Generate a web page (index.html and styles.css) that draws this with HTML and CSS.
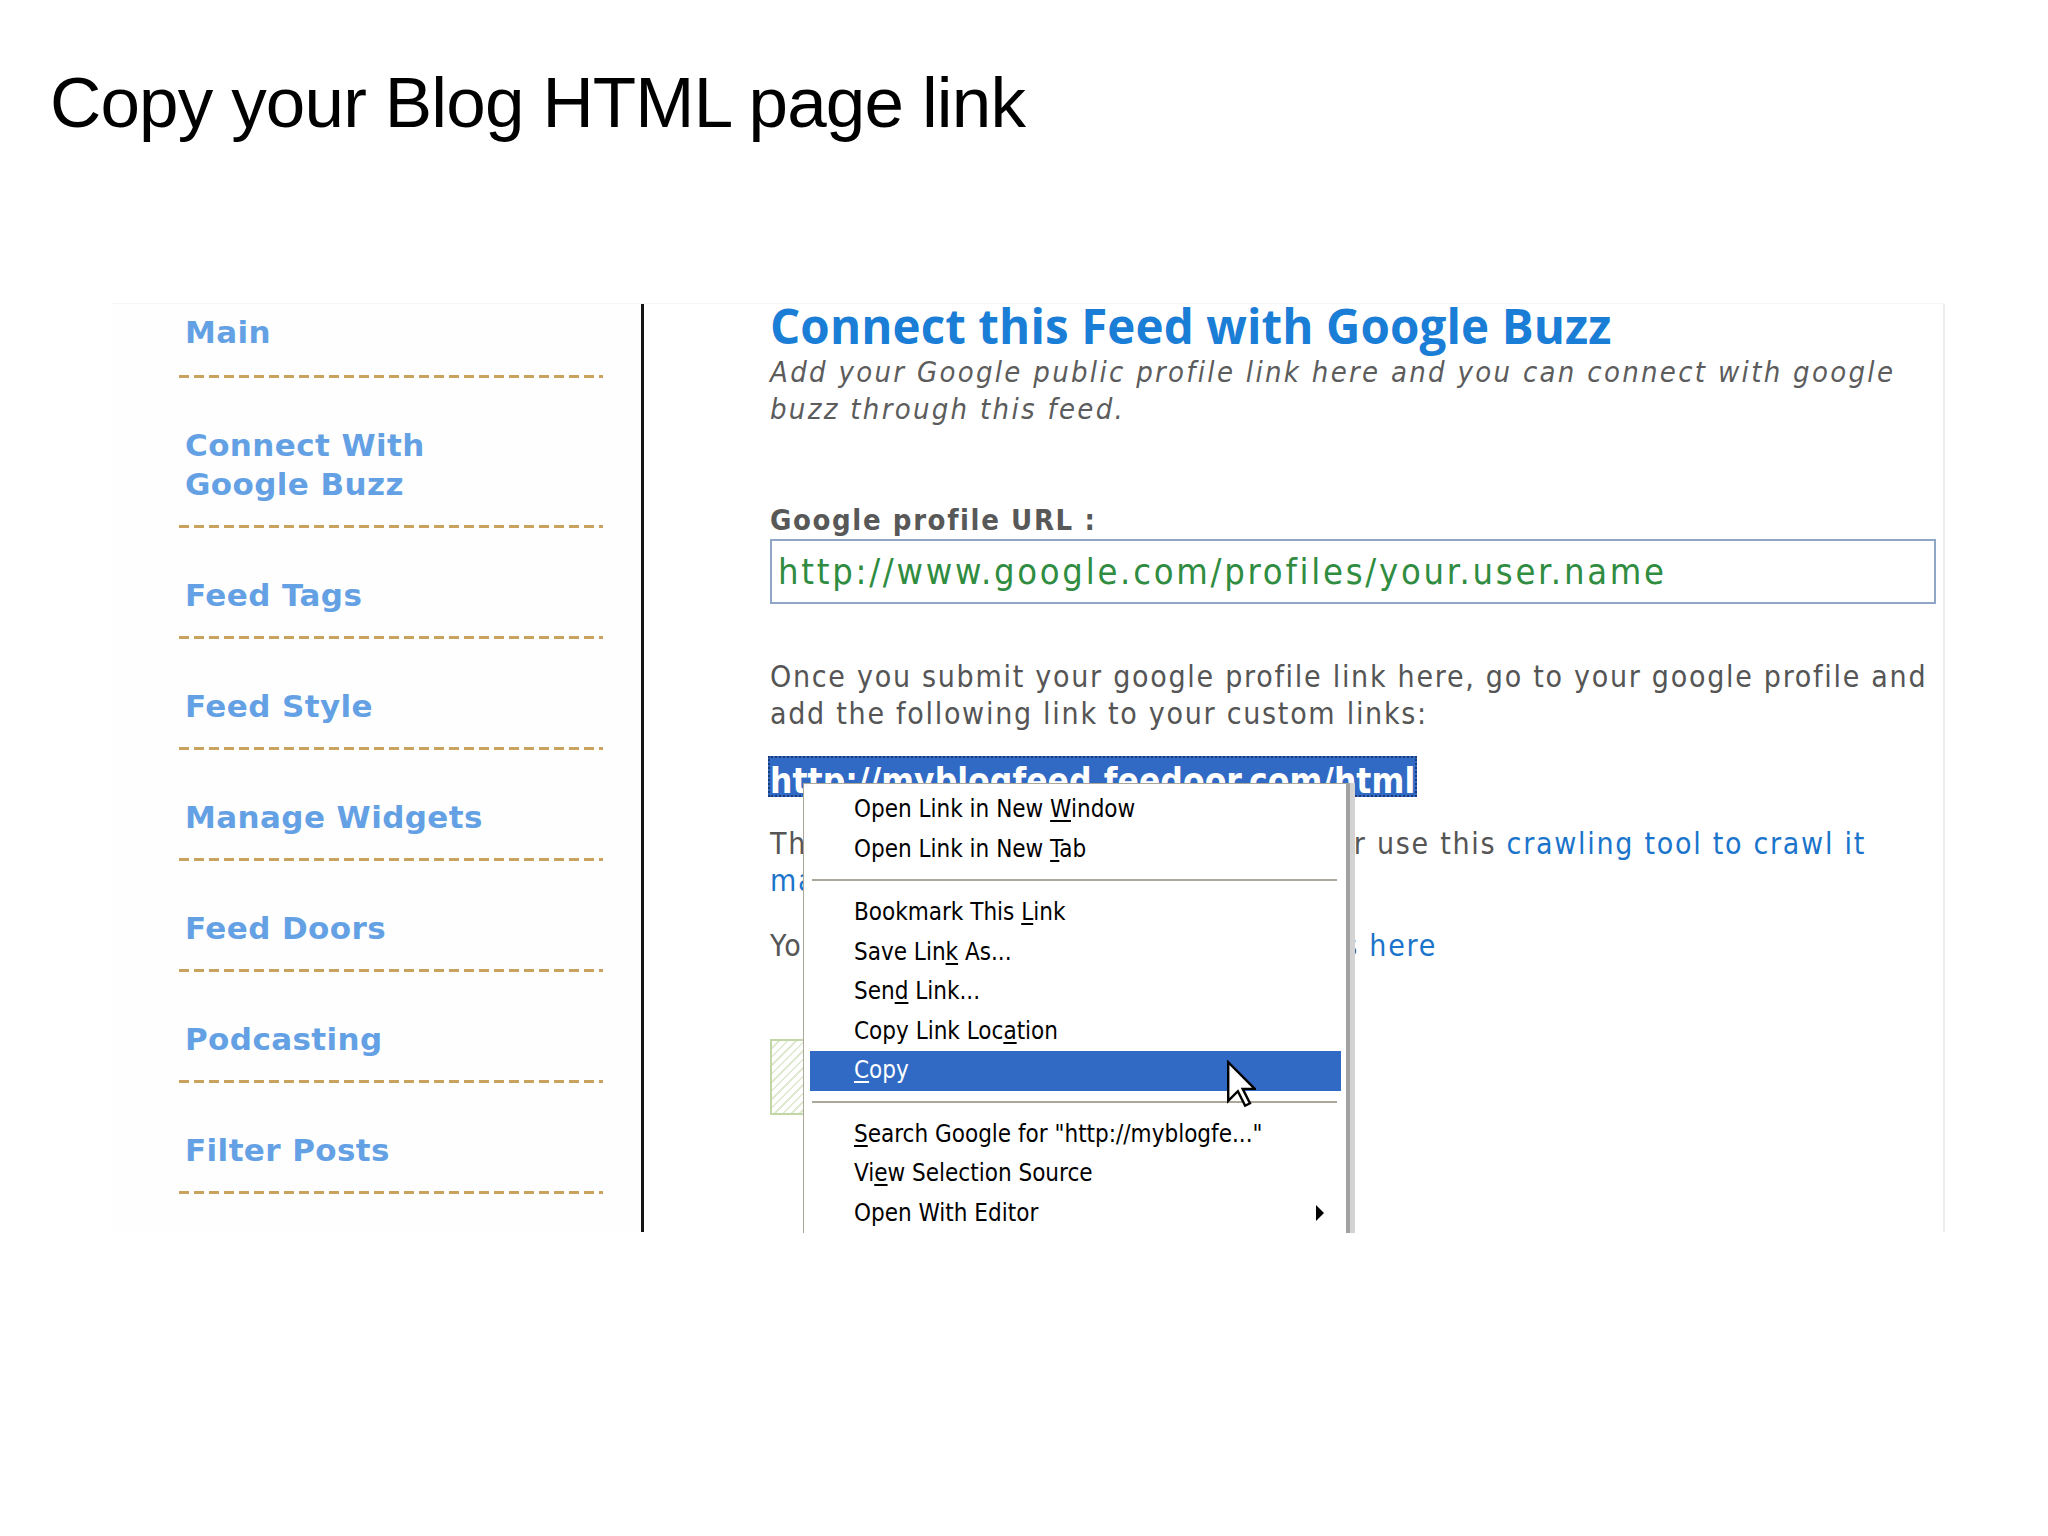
FILE: index.html
```html
<!DOCTYPE html>
<html>
<head>
<meta charset="utf-8">
<title>Copy your Blog HTML page link</title>
<link rel="stylesheet" href="styles.css">
</head>
<body>
<h1 class="title">Copy your Blog HTML page link</h1>
<div class="shot">
  <nav class="sidebar">
    <div class="nav-item first"><span class="nav-text">Main</span></div>
    <div class="nav-item"><span class="nav-text">Connect With<br>Google Buzz</span></div>
    <div class="nav-item"><span class="nav-text">Feed Tags</span></div>
    <div class="nav-item"><span class="nav-text">Feed Style</span></div>
    <div class="nav-item"><span class="nav-text">Manage Widgets</span></div>
    <div class="nav-item"><span class="nav-text">Feed Doors</span></div>
    <div class="nav-item"><span class="nav-text">Podcasting</span></div>
    <div class="nav-item"><span class="nav-text">Filter Posts</span></div>
  </nav>
  <section class="main">
    <h2 class="heading">Connect this Feed with Google Buzz</h2>
    <p class="subtitle">Add your Google public profile link here and you can connect with google buzz through this feed.</p>
    <div class="label">Google profile URL :</div>
    <div class="url-box">http://www.google.com/profiles/your.user.name</div>
    <p class="para p1">Once you submit your google profile link here, go to your google profile and add the following link to your custom links:</p>
    <div class="sel-wrap"><span class="sel">http://myblogfeed.feedoor.com/html</span></div>
    <p class="para p2">This is the HTML page, add to a blog or use this <a class="link">crawling tool to crawl it manually</a>.</p>
    <p class="para p3">You can view all your feed HTML pages <a class="link">here</a></p>
    <div class="btn"></div>

    <div class="ctx-menu">
      <div class="mi">Open Link in New <u>W</u>indow</div>
      <div class="mi">Open Link in New <u>T</u>ab</div>
      <div class="sep"></div>
      <div class="mi">Bookmark This <u>L</u>ink</div>
      <div class="mi">Save Lin<u>k</u> As...</div>
      <div class="mi">Sen<u>d</u> Link...</div>
      <div class="mi">Copy Link Loc<u>a</u>tion</div>
      <div class="mi active"><u>C</u>opy</div>
      <div class="sep"></div>
      <div class="mi"><u>S</u>earch Google for "http://myblogfe..."</div>
      <div class="mi">Vi<u>e</u>w Selection Source</div>
      <div class="mi has-sub"><span>Open With Editor</span><span class="sub-arrow"></span></div>
    </div>

    <svg class="cursor" viewBox="0 0 12 19" width="29" height="48">
      <path d="M0.5,0.5 L0.5,16.5 L4.5,12.5 L7.5,18.5 L9.5,17.5 L6.5,11.5 L11.5,11.5 Z" fill="#fff" stroke="#000" stroke-width="1" stroke-linejoin="miter"/>
    </svg>
  </section>
</div>
</body>
</html>
```

FILE: styles.css
```css
html, body {
  margin: 0;
  padding: 0;
  background: #ffffff;
}

body {
  width: 2048px;
  height: 1536px;
  overflow: hidden;
}

.title {
  margin: 63px 0 0 50px;
  font-family: "Liberation Sans", Arial, sans-serif;
  font-weight: 400;
  font-size: 71px;
  line-height: 80px;
  letter-spacing: -0.85px;
  color: #000;
}

.shot {
  display: flex;
  margin: 160px 0 0 111px;
  width: 1834px;
  height: 929px;
  border-top: 1px solid #f5f5f7;
  box-sizing: border-box;
}

/* ---------- sidebar ---------- */
.sidebar {
  width: 533px;
  flex: none;
  box-sizing: border-box;
  padding: 0 38px 0 68px;
  border-right: 3px solid #141414;
  background: #fefefe;
}

.nav-item {
  padding: 48px 0 21px 6px;
  position: relative;
}

.nav-item.first {
  padding-top: 9px;
  padding-bottom: 23px;
}

.nav-item::after {
  content: "";
  position: absolute;
  left: 0;
  right: 0;
  bottom: -3px;
  height: 3px;
  background: repeating-linear-gradient(to right, #c9a25d 0 10px, transparent 10px 15px);
}

.nav-item + .nav-item {
  margin-top: 3px;
}

.nav-text {
  display: block;
  font-family: "DejaVu Sans", Verdana, sans-serif;
  font-weight: 700;
  font-size: 31px;
  line-height: 39px;
  color: #64a1e4;
  letter-spacing: 0.4px;
}

/* ---------- main ---------- */
.main {
  flex: 1;
  position: relative;
  box-sizing: border-box;
  padding: 0 7px 0 126px;
  border-right: 2px solid #ededed;
}

.heading {
  margin: -4px 0 0;
  font-family: "Open Sans", "DejaVu Sans", sans-serif;
  font-weight: 700;
  font-size: 47.5px;
  line-height: 52px;
  letter-spacing: 0.1px;
  color: #1a7dd6;
  white-space: nowrap;
}

.subtitle {
  margin: 2px 0 0;
  font-family: "DejaVu Sans Condensed", "Liberation Sans", sans-serif;
  font-style: italic;
  font-size: 29px;
  line-height: 37px;
  letter-spacing: 2.3px;
  color: #5c5c5c;
}

.label {
  margin-top: 74px;
  font-family: "DejaVu Sans Condensed", "Liberation Sans", sans-serif;
  font-weight: 700;
  font-size: 29px;
  line-height: 37px;
  letter-spacing: 1.6px;
  color: #585858;
}

.url-box {
  height: 65px;
  box-sizing: border-box;
  border: 2px solid #8fa6c6;
  padding-left: 6px;
  font-family: "DejaVu Sans Condensed", "Liberation Sans", sans-serif;
  font-size: 36px;
  line-height: 61px;
  letter-spacing: 2.75px;
  color: #2f8c40;
  white-space: nowrap;
}

.para {
  margin: 0;
  font-family: "DejaVu Sans Condensed", "Liberation Sans", sans-serif;
  font-size: 30px;
  line-height: 37px;
  letter-spacing: 1.72px;
  color: #555;
}

.p1 { margin-top: 54px; }
.p2 { margin-top: 28px; }
.p3 { margin-top: 28px; }

.link {
  color: #1b74cb;
  text-decoration: none;
}

.sel-wrap {
  margin-top: 24px;
  height: 41px;
  margin-left: -2px;
}

.sel {
  display: inline-block;
  box-sizing: border-box;
  height: 41px;
  padding: 8px 2px 0;
  background: #316ac5;
  outline: 2px dotted #1c3a78;
  outline-offset: -2px;
  font-family: "DejaVu Sans Condensed", "Liberation Sans", sans-serif;
  font-weight: 700;
  font-size: 35px;
  line-height: 1;
  letter-spacing: 0.07px;
  color: #fff;
  white-space: nowrap;
}

.btn {
  margin-top: 75px;
  width: 260px;
  height: 76px;
  box-sizing: border-box;
  border: 2px solid #c3d7a6;
  background: repeating-linear-gradient(135deg, #ffffff 0 4px, #e0ead2 4px 6px);
}

/* ---------- context menu (overlay) ---------- */
.ctx-menu {
  position: absolute;
  left: 159px;
  top: 479px;
  width: 547px;
  height: 450px;
  box-sizing: border-box;
  padding: 6px 5px 0 6px;
  background: #ffffff;
  border-left: 1px solid #aca899;
  border-top: 1px solid #aca899;
  border-right: 4px solid #a2a2a2;
  box-shadow: 5px 0 0 #d3d3d3;
  font-family: "DejaVu Sans Condensed", "Liberation Sans", sans-serif;
  font-size: 24px;
  color: #000;
  overflow: hidden;
}

.mi {
  height: 39.5px;
  line-height: 39.5px;
  padding-left: 44px;
  white-space: nowrap;
}

.mi u {
  text-decoration-thickness: 2px;
  text-underline-offset: 3px;
}

.mi.active {
  background: #316ac5;
  color: #fff;
}

.sep {
  height: 2px;
  margin: 10px 4px 12px 2px;
  background: #aca899;
}

.mi.has-sub {
  display: flex;
  align-items: center;
}

.sub-arrow {
  margin-left: auto;
  margin-right: 17px;
  width: 0;
  height: 0;
  border-left: 8px solid #000;
  border-top: 8px solid transparent;
  border-bottom: 8px solid transparent;
}

.cursor {
  position: absolute;
  left: 583px;
  top: 756px;
}
```
